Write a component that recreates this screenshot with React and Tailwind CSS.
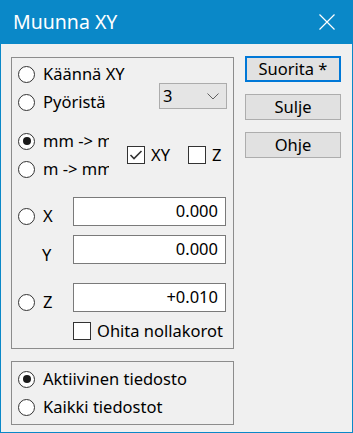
import React from "react";

const Radio = ({ checked }) => (
  <span className="w-[17px] h-[17px] rounded-full border border-[#333333] bg-white flex items-center justify-center shrink-0">
    {checked && <span className="w-[8px] h-[8px] rounded-full bg-[#1a1a1a]" />}
  </span>
);

const Check = ({ checked }) => (
  <span className="w-[18px] h-[18px] border border-[#333333] bg-white flex items-center justify-center shrink-0">
    {checked && (
      <svg width="14" height="10" viewBox="0 0 14 10">
        <path d="M1.5 5 L5 8.5 L12.5 1" fill="none" stroke="#333333" strokeWidth="1.6" />
      </svg>
    )}
  </span>
);

const RadioRow = ({ checked, label, clip }) => (
  <div className="h-[28px] flex items-center gap-[8px]">
    <Radio checked={checked} />
    <span className={clip ? "w-[66px] overflow-hidden whitespace-nowrap" : "whitespace-nowrap"}>{label}</span>
  </div>
);

const Field = ({ value }) => (
  <div className="w-[153px] h-[29px] border border-[#7a7a7a] bg-white flex items-center justify-end pr-[7px]">
    {value}
  </div>
);

const Btn = ({ children, def }) => (
  <div
    className={
      "w-[96px] h-[26px] bg-[#e1e1e1] flex items-center justify-center " +
      (def ? "border-2 border-[#0078d7]" : "border border-[#adadad]")
    }
  >
    {children}
  </div>
);

export default function App() {
  return (
    <div
      className="w-[353px] h-[433px] bg-[#0a88c8] flex flex-col text-[16.5px] text-black leading-none"
      style={{ fontFamily: '"Noto Sans", "Open Sans", sans-serif' }}
    >
      <div className="h-[44px] shrink-0 flex items-center justify-between pl-[13px] pr-[18px] text-white">
        <span className="text-[19.5px]">Muunna XY</span>
        <svg width="16" height="16" viewBox="0 0 16 16">
          <path d="M0.5 0.5 L15.5 15.5 M15.5 0.5 L0.5 15.5" stroke="#ffffff" strokeWidth="1.2" />
        </svg>
      </div>
      <div className="flex-1 mx-[1px] mb-[1px] bg-[#f0f0f0] flex pl-[10px] pt-[13px] gap-[11px]">
        <div className="flex flex-col gap-[12px]">
          <div className="w-[223px] h-[292px] border border-[#8c8c8c] pl-[6px] pt-[2px] flex flex-col">
            <div className="flex">
              <div className="w-[141px] flex flex-col">
                <RadioRow label="Käännä XY" />
                <RadioRow label="Pyöristä" />
              </div>
              <div className="mt-[23px] w-[68px] h-[26px] bg-[#e5e5e5] border border-[#acacac] flex items-center justify-between pl-[3px] pr-[7px]">
                <span>3</span>
                <svg width="12" height="7" viewBox="0 0 12 7">
                  <path d="M0.5 0.5 L6 6 L11.5 0.5" fill="none" stroke="#606060" strokeWidth="1" />
                </svg>
              </div>
            </div>
            <div className="mt-[11px] flex items-center">
              <div className="flex flex-col">
                <RadioRow checked label="mm -> mm" clip />
                <RadioRow label="m -> mm" clip />
              </div>
              <div className="ml-[18px] flex items-center gap-[6px]">
                <Check checked />
                <span>XY</span>
              </div>
              <div className="ml-[18px] flex items-center gap-[6px]">
                <Check />
                <span>Z</span>
              </div>
            </div>
            <div className="mt-[14px] flex items-end">
              <div className="w-[55px] h-[17px] mb-[1px] flex items-center gap-[8px]">
                <Radio />
                <span>X</span>
              </div>
              <Field value="0.000" />
            </div>
            <div className="mt-[9px] flex items-end">
              <div className="w-[55px] h-[17px] mb-[0px] pl-[24px] flex items-center">
                <span>Y</span>
              </div>
              <Field value="0.000" />
            </div>
            <div className="mt-[19px] flex items-end">
              <div className="w-[55px] h-[17px] mb-[1px] flex items-center gap-[8px]">
                <Radio />
                <span>Z</span>
              </div>
              <Field value="+0.010" />
            </div>
            <div className="mt-[10px] pl-[55px] flex items-center gap-[6px]">
              <Check />
              <span>Ohita nollakorot</span>
            </div>
          </div>
          <div className="w-[223px] h-[64px] border border-[#8c8c8c] pl-[6px] pt-[3px] flex flex-col">
            <RadioRow checked label="Aktiivinen tiedosto" />
            <RadioRow label="Kaikki tiedostot" />
          </div>
        </div>
        <div className="flex flex-col gap-[12px] -mt-[1px]">
          <Btn def>Suorita *</Btn>
          <Btn>Sulje</Btn>
          <Btn>Ohje</Btn>
        </div>
      </div>
    </div>
  );
}
